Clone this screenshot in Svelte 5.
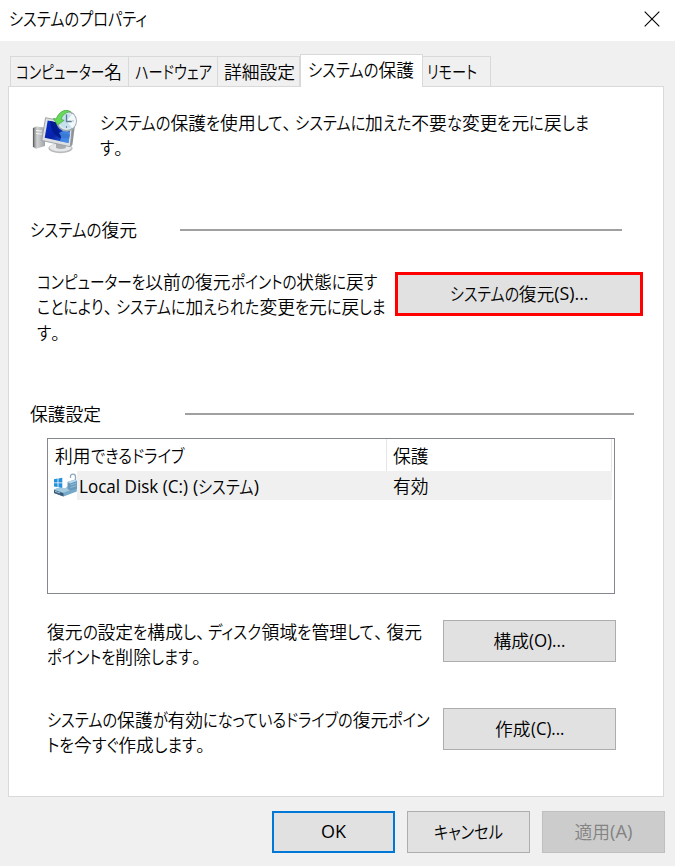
<script>
	let active = 'システムの保護';

	const tabs = [
		{ name: 'コンピューター名', size: 106, width: 119 },
		{ name: 'ハードウェア', size: 77, width: 89 },
		{ name: '詳細設定', size: 71, width: 82 },
		{ name: 'システムの保護', size: 106, width: 123 },
		{ name: 'リモート', size: 50, width: 68 }
	];

	const drives = [{ name: 'Local Disk (C:)', kind: '(システム)', state: '有効' }];

	// splits a label into kana, comma, kanji and latin runs
	function runs(text) {
		return text.match(/[\u3041-\u30ff]+|、|[\x20-\x7e]+|[^\u3041-\u30ff、\x20-\x7e]+/g).map((t) => ({
			text: t,
			kana: /[\u3041-\u30ff]/.test(t),
			comma: t === '、',
			latin: /[\x20-\x7e]/.test(t)
		}));
	}

	// condenses the kana (or the latin, if there is no kana) so that the line gets its width
	function fit(node, width) {
		let flex = [...node.querySelectorAll('.kana')];
		if (!flex.length) flex = [...node.querySelectorAll('.latin')];
		if (!flex.length) return;
		const sizes = flex.map((el) => el.getBoundingClientRect().width);
		const sum = sizes.reduce((a, b) => a + b, 0);
		const rest = node.getBoundingClientRect().width - sum;
		const k = (width - rest) / sum;
		flex.forEach((el, i) => {
			el.style.width = sizes[i] * k + 'px';
			el.firstElementChild.style.transform = `scaleX(${k})`;
		});
	}
</script>

{#snippet line(text, width)}
	<span class="line" use:fit={width}>{#each runs(text) as r}<span class="run" class:kana={r.kana} class:comma={r.comma} class:latin={r.latin}><span class="glyphs">{r.text}</span></span>{/each}</span>
{/snippet}

<div class="dialog">
	<header>
		{@render line('システムのプロパティ', 138)}
		<svg class="close" width="16" height="16" viewBox="0 0 16 16">
			<path d="M.7.7l14.6 14.6M15.3.7L.7 15.3" stroke="#000" stroke-width="1.1" fill="none" />
		</svg>
	</header>

	<nav>
		{#each tabs as tab}
			<div class="tab" class:active={tab.name === active} style="width: {tab.width}px" on:click={() => (active = tab.name)}>
				{@render line(tab.name, tab.size)}
			</div>
		{/each}
	</nav>

	<main>
		<div class="intro">
			<svg width="46" height="46" viewBox="32 108 46 46">
				<defs>
					<linearGradient id="screen" x1="0" y1="0" x2="1" y2="1">
						<stop offset="0" stop-color="#0a2fd0" />
						<stop offset=".5" stop-color="#0722a8" />
						<stop offset="1" stop-color="#2c74e0" />
					</linearGradient>
					<linearGradient id="metal" x1="0" y1="0" x2="1" y2="0">
						<stop offset="0" stop-color="#77797b" />
						<stop offset=".35" stop-color="#d0d2d3" />
						<stop offset="1" stop-color="#a0a2a3" />
					</linearGradient>
				</defs>
				<path d="M33 128l3-1.4 9 1v18.5l-9 2.6-3-1.8z" fill="url(#metal)" />
				<path d="M36 130.5l6 .6M36 133.5l6 .6" stroke="#f5f5f5" stroke-width="1" />
				<path d="M33.5 128v19" stroke="#606264" stroke-width="1.2" />
				<ellipse cx="60.5" cy="148.3" rx="12" ry="4.9" fill="#b9bbbd" />
				<ellipse cx="60.5" cy="147.5" rx="11" ry="4" fill="#e7e8e9" />
				<path d="M56 143h9l1 5q-5 2-10 0z" fill="#a9acae" />
				<path d="M45.6 117.7l27 5.6-2.3 23.4-28.6-6.2z" fill="#dde0e2" stroke="#969ca2" stroke-width=".9" />
				<path d="M47.7 120.4l22.8 5-2 17.6-23.8-5.2z" fill="url(#screen)" />
				<path d="M50 121l7 1.5q-1 7 4 10.5l8.5 1.5-.5 4-9-.6q-9-4-10-16.9z" fill="#001a8f" />
				<path d="M59 133q6-4 11-1l-1.3 11-9-1.8q3-4-.7-8.2z" fill="#4f99ee" opacity=".75" />
				<path d="M72.6 124l2.4 1-2.6 20-2.1 1.5z" fill="#8e9398" />
				<circle cx="66.5" cy="121" r="9.7" fill="#dceaf1" stroke="#9eaab0" stroke-width="1.5" />
				<circle cx="66.5" cy="121" r="7.4" fill="#c7e0ee" />
				<path d="M66.5 121l6-7.3a9.5 9.5 0 0 1 0 14.6z" fill="#f3f8fa" />
				<path d="M66.5 114.5v7h5.2" stroke="#5a7a99" stroke-width="1.3" fill="none" />
				<path d="M66.5 126v2M60 121h1.5M72.5 121h1" stroke="#708b9e" />
				<path d="M70.5 111.5q-7-3.5-12.4 3.8-1.3 1.8-1.5 3.5l-3.3-.3 4.4 6.5 6.5-4.7-3.1-.8q1.5-6.7 9.4-8z" fill="#67da5b" stroke="#4fae4a" stroke-width=".8" />
			</svg>
			<p>
				{@render line('システムの保護を使用して、システムに加えた不要な変更を元に戻しま', 489)}
				{@render line('す。', 32)}
			</p>
		</div>

		<div class="group">
			<span class="caption">{@render line('システムの復元', 107)}</span>
			<hr />
		</div>
		<div class="restore">
			<p>
				{@render line('コンピューターを以前の復元ポイントの状態に戻す', 340)}
				{@render line('ことにより、システムに加えられた変更を元に戻しま', 349)}
				{@render line('す。', 32)}
			</p>
			<button class="marked">{@render line('システムの復元(S)...', 139)}</button>
		</div>

		<div class="group protection">
			<span class="caption">{@render line('保護設定', 71)}</span>
			<hr />
		</div>
		<div class="list">
			<div class="head">
				<div class="col">{@render line('利用できるドライブ', 129)}</div>
				<div class="col">{@render line('保護', 36)}</div>
			</div>
			{#each drives as drive}
				<div class="row">
					<svg width="25" height="25" viewBox="0 0 25 25">
						<path d="M1 6.2l3.6-.6v3.9H1zM5.4 5.5l3.9-.7v4.7H5.4zM1 10.3h3.6v3.8L1 13.6zM5.4 10.3h3.9v4.6l-3.9-.6z" fill="#2590dc" />
						<path d="M1 16.5l4-1.5 7 .5 4-3 7.8 2.5v3.5L10.5 23.5 1 20z" fill="#77a9c9" />
						<path d="M1 16.5l4-1.5 7 .5 4-3 7.8 2.5-13.5 4.8z" fill="#a5cbe1" />
						<path d="M1 17l9.5 3.2v3.3L1 20z" fill="#3a5c7a" />
						<path d="M2 18.3l5 1.7" stroke="#b6dce9" stroke-width=".8" />
						<path d="M17.5 5V3.5q0-2.4 2.5-2.4t2.5 2.4V8" fill="none" stroke="#8fa9bb" stroke-width="1.3" />
						<path d="M14.5 9l7.5-2.4 2 1.5v7.6l-7 2-2.5-2z" fill="#6899bb" />
						<path d="M14.5 9l2.5 1.5 7-2.4-2-1.5z" fill="#b7d8ed" />
						<path d="M17.5 12l6-1.8M17.5 14.5l6-1.8" stroke="#9bc5df" stroke-width=".8" />
					</svg>
					<div class="cells">
						<div class="cell name">
							{@render line(drive.name, 109)}
							{@render line(drive.kind, 66)}
						</div>
						<div class="cell">{@render line(drive.state, 36)}</div>
					</div>
				</div>
			{/each}
		</div>

		<div class="action configure">
			<p>
				{@render line('復元の設定を構成し、ディスク領域を管理して、復元', 375)}
				{@render line('ポイントを削除します。', 163)}
			</p>
			<button>{@render line('構成(O)...', 72)}</button>
		</div>
		<div class="action">
			<p>
				{@render line('システムの保護が有効になっているドライブの復元ポイン', 383)}
				{@render line('トを今すぐ作成します。', 167)}
			</p>
			<button>{@render line('作成(C)...', 69)}</button>
		</div>
	</main>

	<footer>
		<button class="default">{@render line('OK', 25)}</button>
		<button>{@render line('キャンセル', 69)}</button>
		<button disabled>{@render line('適用(A)', 58)}</button>
	</footer>
</div>

<style>
	:global(body) {
		margin: 0;
	}

	.dialog {
		width: 675px;
		height: 866px;
		overflow: hidden;
		background: #f0f0f0;
		color: #000;
		font: 350 17.8px/25.4px 'Open Sans', 'Noto Sans CJK JP', sans-serif;
	}

	.line {
		display: block;
		width: max-content;
		white-space: pre;
	}

	.run {
		display: inline-block;
		vertical-align: top;
		font-family: 'Noto Sans CJK JP', sans-serif;
	}

	.latin {
		font-family: 'Open Sans', sans-serif;
		font-weight: 400;
	}

	.kana {
		font-feature-settings: 'palt';
	}

	.comma {
		letter-spacing: -5.3px;
	}

	.glyphs {
		display: inline-block;
		transform-origin: 0 0;
	}

	header {
		height: 41px;
		box-sizing: border-box;
		padding: 0 15px 3px 9px;
		display: flex;
		align-items: center;
		justify-content: space-between;
		background: #fff;
	}

	nav {
		height: 46px;
		padding-left: 10px;
		display: flex;
		align-items: flex-end;
	}

	.tab {
		height: 31px;
		box-sizing: border-box;
		padding: 2px 0 0 6px;
		border: 1px solid #d9d9d9;
		border-left-width: 0;
	}

	.tab:first-child {
		border-left-width: 1px;
		padding-left: 5px;
	}

	.tab.active {
		position: relative;
		height: 33px;
		padding-left: 7px;
		background: #fff;
		border-left-width: 1px;
		border-bottom: 0;
	}

	.tab:last-child {
		padding-left: 4px;
	}

	main {
		width: 656px;
		height: 711px;
		box-sizing: border-box;
		margin: -1px 0 0 8px;
		border: 1px solid #d9d9d9;
		background: #fff;
	}

	p {
		margin: 0;
	}

	.intro {
		height: 107px;
		padding: 23px 0 0 23px;
		display: flex;
		gap: 22px;
		align-items: flex-start;
	}

	.intro svg {
		margin-top: -2px;
	}

	.group {
		height: 26px;
		padding-left: 21px;
		display: flex;
		align-items: center;
	}

	.caption {
		width: 150px;
	}

	hr {
		width: 442px;
		height: 2px;
		margin: 0;
		border: 0;
		background: #a0a0a0;
	}

	.protection .caption {
		width: 155px;
	}

	.protection hr {
		width: 449px;
	}

	.restore {
		height: 132px;
		padding: 26px 0 0 28px;
		display: flex;
		align-items: flex-start;
	}

	.restore p {
		width: 358px;
	}

	button {
		width: 173px;
		height: 42px;
		padding: 0;
		display: flex;
		align-items: center;
		justify-content: center;
		flex: none;
		font: inherit;
		color: inherit;
		background: #e1e1e1;
		border: 1px solid #adadad;
	}

	.marked {
		width: 248px;
		height: 44px;
		margin-top: 3px;
		border: 3px solid #f00;
	}

	.list {
		width: 568px;
		height: 156px;
		box-sizing: border-box;
		margin: 11px 0 0 38px;
		border: 1px solid #828790;
	}

	.head {
		height: 32px;
		display: flex;
	}

	.col {
		width: 339px;
		box-sizing: border-box;
		padding: 4px 0 0 7px;
		border-right: 1px solid #e5e5e5;
	}

	.col + .col {
		width: 225px;
		padding-left: 6px;
	}

	.row {
		display: flex;
		height: 29px;
		padding-left: 4px;
	}

	.row svg {
		margin: 2px 0 0 1px;
	}

	.cells {
		display: flex;
		width: 535px;
		margin-left: -1px;
		background: #f0f0f0;
	}

	.cell {
		padding-top: 2px;
	}

	.name {
		width: 314px;
		padding: 3px 0 0 2px;
		display: flex;
		gap: 5px;
	}

	.action {
		height: 88px;
		padding-left: 38px;
		display: flex;
		align-items: flex-start;
	}

	.action p {
		width: 396px;
		margin-top: -1px;
	}

	.configure {
		margin-top: 26px;
	}

	footer {
		padding: 14px 10px 0 0;
		display: flex;
		justify-content: flex-end;
		gap: 12px;
	}

	footer button {
		width: 123px;
	}

	.default {
		border: 2px solid #0078d7;
	}

	button:disabled {
		color: #838383;
		background: #ccc;
		border-color: #bfbfbf;
	}
</style>
